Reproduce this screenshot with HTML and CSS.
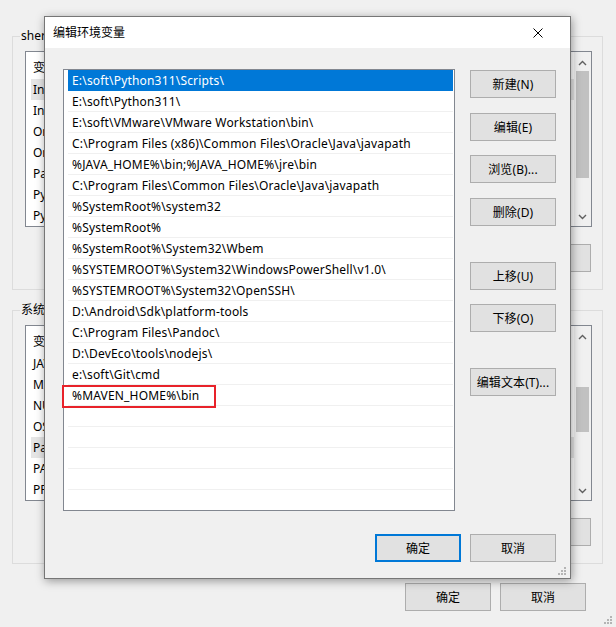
FILE: index.html
```html
<!DOCTYPE html>
<html lang="zh-CN">
<head>
<meta charset="utf-8">
<title>编辑环境变量</title>
<link rel="stylesheet" href="styles.css">
</head>
<body>
<div class="bgwin">
  <fieldset class="group g1">
    <legend>sherlock 的用户变量(U)</legend>
    <div class="bglist">
      <div class="bglist-body">
        <div class="bgrow head"><span class="c1">变量</span><span>值</span></div>
        <div class="bgrow sel"><span class="c1">IntelliJ IDEA</span><span>E:\soft\IntelliJ IDEA\bin;</span></div>
        <div class="bgrow"><span class="c1">IntelliJ IDEA Community</span><span>E:\soft\IDEA CE\bin;</span></div>
        <div class="bgrow"><span class="c1">OneDrive</span><span>C:\Users\sherlock\OneDrive</span></div>
        <div class="bgrow"><span class="c1">OneDriveConsumer</span><span>C:\Users\sherlock\OneDrive</span></div>
        <div class="bgrow"><span class="c1">Path</span><span>E:\soft\Python311\Scripts\;</span></div>
        <div class="bgrow"><span class="c1">PyCharm</span><span>E:\soft\PyCharm\bin;</span></div>
        <div class="bgrow"><span class="c1">PyCharm Community Edition</span><span>E:\soft\PyCharm CE\bin;</span></div>
      </div>
      <div class="vscroll">
        <svg class="arrow" width="9" height="6" viewBox="0 0 9 6"><polyline points="1,5 4.5,1.5 8,5" fill="none" stroke="#606060" stroke-width="1.4"/></svg>
        <div class="track"><div class="thumb t1"></div></div>
        <svg class="arrow" width="9" height="6" viewBox="0 0 9 6"><polyline points="1,1 4.5,4.5 8,1" fill="none" stroke="#606060" stroke-width="1.4"/></svg>
      </div>
    </div>
    <div class="btnrow">
      <button class="btn">新建(N)...</button>
      <button class="btn">编辑(E)...</button>
      <button class="btn">删除(D)</button>
    </div>
  </fieldset>

  <fieldset class="group g2">
    <legend>系统变量(S)</legend>
    <div class="bglist">
      <div class="bglist-body">
        <div class="bgrow head"><span class="c1">变量</span><span>值</span></div>
        <div class="bgrow"><span class="c1">JAVA_HOME</span><span>E:\soft\Java\jdk-17</span></div>
        <div class="bgrow"><span class="c1">MAVEN_HOME</span><span>E:\soft\apache-maven-3.9.6</span></div>
        <div class="bgrow"><span class="c1">NUMBER_OF_PROCESSORS</span><span>16</span></div>
        <div class="bgrow"><span class="c1">OS</span><span>Windows_NT</span></div>
        <div class="bgrow sel"><span class="c1">Path</span><span>E:\soft\Python311\Scripts\;</span></div>
        <div class="bgrow"><span class="c1">PATHEXT</span><span>.COM;.EXE;.BAT;.CMD;.VBS</span></div>
        <div class="bgrow"><span class="c1">PROCESSOR_ARCHITECTURE</span><span>AMD64</span></div>
      </div>
      <div class="vscroll">
        <svg class="arrow" width="9" height="6" viewBox="0 0 9 6"><polyline points="1,5 4.5,1.5 8,5" fill="none" stroke="#606060" stroke-width="1.4"/></svg>
        <div class="track"><div class="thumb t2"></div></div>
        <svg class="arrow" width="9" height="6" viewBox="0 0 9 6"><polyline points="1,1 4.5,4.5 8,1" fill="none" stroke="#606060" stroke-width="1.4"/></svg>
      </div>
    </div>
    <div class="btnrow">
      <button class="btn">新建(W)...</button>
      <button class="btn">编辑(I)...</button>
      <button class="btn">删除(L)</button>
    </div>
  </fieldset>

  <div class="bgfooter">
    <button class="btn">确定</button>
    <button class="btn">取消</button>
  </div>
  <svg class="grip page-grip" width="9" height="9" viewBox="0 0 9 9">
    <rect x="6" y="0" width="2" height="2" fill="#b4b4b4"/>
    <rect x="3" y="3" width="2" height="2" fill="#b4b4b4"/><rect x="6" y="3" width="2" height="2" fill="#b4b4b4"/>
    <rect x="0" y="6" width="2" height="2" fill="#b4b4b4"/><rect x="3" y="6" width="2" height="2" fill="#b4b4b4"/><rect x="6" y="6" width="2" height="2" fill="#b4b4b4"/>
  </svg>
</div>

<div class="dialog">
  <div class="titlebar">
    <span class="title">编辑环境变量</span>
    <svg class="close" width="10" height="10" viewBox="0 0 10 10"><path d="M0.5 0.5 L9.5 9.5 M9.5 0.5 L0.5 9.5" stroke="#000" stroke-width="1"/></svg>
  </div>
  <div class="dlg-body">
    <div class="pathlist">
      <div class="prow sel">E:\soft\Python311\Scripts\</div>
      <div class="prow">E:\soft\Python311\</div>
      <div class="prow">E:\soft\VMware\VMware Workstation\bin\</div>
      <div class="prow">C:\Program Files (x86)\Common Files\Oracle\Java\javapath</div>
      <div class="prow">%JAVA_HOME%\bin;%JAVA_HOME%\jre\bin</div>
      <div class="prow">C:\Program Files\Common Files\Oracle\Java\javapath</div>
      <div class="prow">%SystemRoot%\system32</div>
      <div class="prow">%SystemRoot%</div>
      <div class="prow">%SystemRoot%\System32\Wbem</div>
      <div class="prow">%SYSTEMROOT%\System32\WindowsPowerShell\v1.0\</div>
      <div class="prow">%SYSTEMROOT%\System32\OpenSSH\</div>
      <div class="prow">D:\Android\Sdk\platform-tools</div>
      <div class="prow">C:\Program Files\Pandoc\</div>
      <div class="prow">D:\DevEco\tools\nodejs\</div>
      <div class="prow">e:\soft\Git\cmd</div>
      <div class="prow mark">%MAVEN_HOME%\bin<span class="redbox"></span></div>
      <div class="prow"></div>
      <div class="prow"></div>
      <div class="prow"></div>
      <div class="prow"></div>
      <div class="prow last"></div>
    </div>
    <div class="side">
      <button class="btn b1">新建(N)</button>
      <button class="btn b2">编辑(E)</button>
      <button class="btn b3">浏览(B)...</button>
      <button class="btn b4">删除(D)</button>
      <button class="btn b5">上移(U)</button>
      <button class="btn b6">下移(O)</button>
      <button class="btn b7">编辑文本(T)...</button>
    </div>
  </div>
  <div class="dlg-footer">
    <button class="btn default">确定</button>
    <button class="btn">取消</button>
  </div>
  <svg class="grip dlg-grip" width="9" height="9" viewBox="0 0 9 9">
    <rect x="6" y="0" width="2" height="2" fill="#b4b4b4"/>
    <rect x="3" y="3" width="2" height="2" fill="#b4b4b4"/><rect x="6" y="3" width="2" height="2" fill="#b4b4b4"/>
    <rect x="0" y="6" width="2" height="2" fill="#b4b4b4"/><rect x="3" y="6" width="2" height="2" fill="#b4b4b4"/><rect x="6" y="6" width="2" height="2" fill="#b4b4b4"/>
  </svg>
</div>
</body>
</html>
```
FILE: styles.css
```css
* { box-sizing: border-box; }
html, body { margin: 0; padding: 0; }
body {
  width: 616px;
  height: 627px;
  overflow: hidden;
  background: #f0f0f0;
  font-family: "Noto Sans", "Noto Sans CJK SC", sans-serif;
  font-size: 12px;
  color: #000;
  position: relative;
}

/* ---------- background window ---------- */
.bgwin {
  height: 627px;
  padding: 28px 13px 0 12px;
  position: relative;
}
.group {
  margin: 0;
  min-width: 0;
  border: 1px solid #dcdcdc;
  padding: 7px 10px 17px 12px;
}
.group legend {
  padding: 0 1px;
  margin-left: -5px;
  line-height: 16px;
}
.g2 { margin-top: 12px; }
.bglist {
  display: flex;
  height: 176px;
  border: 1px solid #828790;
  background: #fff;
}
.bglist-body {
  flex: 1;
  padding: 5px 0 0 5px;
  overflow: hidden;
}
.bgrow {
  height: 21px;
  line-height: 21px;
  white-space: nowrap;
  display: flex;
  padding-left: 2px;
}
.bgrow .c1 { width: 200px; }
.bgrow.head { height: 22px; }
.bgrow.sel { background: #e5e5e5; }
.vscroll {
  width: 17px;
  background: #f0f0f0;
  display: flex;
  flex-direction: column;
  align-items: center;
  padding: 8px 0 6px;
}
.vscroll .arrow { flex: none; }
.track {
  flex: 1;
  width: 100%;
  padding: 5px 1px;
}
.thumb { background: #c1c1c1; margin: 0 1px; }
.t1 { height: 107px; }
.t2 { height: 45px; margin-top: 42px; }
.btnrow {
  display: flex;
  justify-content: flex-end;
  gap: 9px;
  margin-top: 17px;
  margin-right: 1px;
}

.btn {
  width: 86px;
  height: 28px;
  background: #e1e1e1;
  border: 1px solid #adadad;
  font-family: inherit;
  font-size: 12px;
  letter-spacing: 0.1px;
  color: #000;
  padding: 0;
  margin: 0;
}
.bgfooter {
  display: flex;
  justify-content: flex-end;
  gap: 9px;
  margin-top: 19px;
  padding-right: 17px;
}
.grip { position: absolute; }
.page-grip { right: 3px; bottom: 2px; }

/* ---------- dialog ---------- */
.dialog {
  position: absolute;
  left: 44px;
  top: 16px;
  width: 527px;
  height: 563px;
  background: #f0f0f0;
  border: 1px solid #767676;
  box-shadow: 1px 2px 9px rgba(0, 0, 0, 0.38);
}
.titlebar {
  height: 31px;
  background: #fff;
  display: flex;
  align-items: center;
  justify-content: space-between;
  padding: 0 27px 0 8px;
}
.title { line-height: 16px; }
.close { display: block; }
.dlg-body {
  display: flex;
  gap: 15px;
  padding: 21px 0 0 18px;
}
.pathlist {
  width: 392px;
  height: 442px;
  border: 1px solid #828790;
  background: #fff;
  padding: 0 1px 0 4px;
}
.prow {
  height: 21px;
  line-height: 20px;
  padding-top: 1px;
  border-bottom: 1px solid #f0f0f0;
  padding-left: 4px;
  letter-spacing: 0.18px;
  white-space: nowrap;
  position: relative;
}
.prow.last { height: 20px; border-bottom: 0; }
.prow.sel {
  background: #0078d7;
  color: #fff;
  border-bottom-color: #0078d7;
}
.redbox {
  position: absolute;
  left: -6px;
  top: 0;
  width: 154px;
  height: 23px;
  border: 2px solid #e8222a;
}
.side {
  display: flex;
  flex-direction: column;
  padding-top: 1px;
}
.b2, .b4 { margin-top: 15px; }
.b3, .b6 { margin-top: 14px; }
.b5, .b7 { margin-top: 36px; }
.dlg-footer {
  display: flex;
  justify-content: flex-end;
  gap: 9px;
  padding: 23px 14px 0 0;
}
.btn.default { border: 2px solid #0078d7; }
.dlg-grip { right: 3px; bottom: 2px; }
```
